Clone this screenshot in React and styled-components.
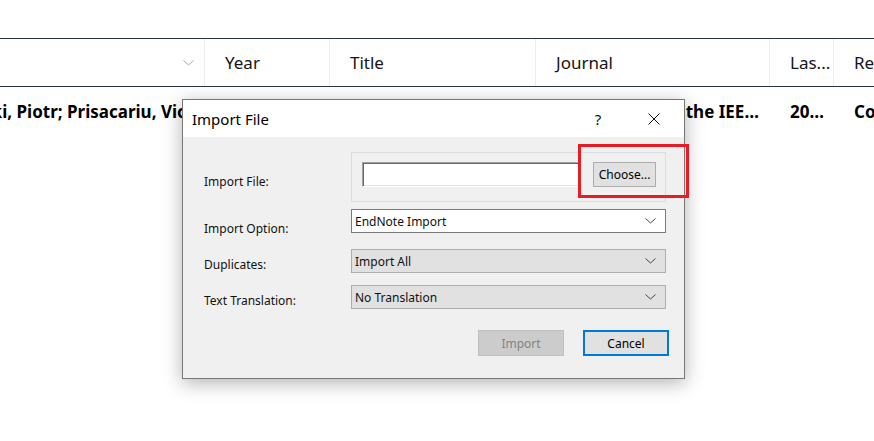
import React from 'react';
import styled, { createGlobalStyle } from 'styled-components';

const GlobalStyle = createGlobalStyle`
  html, body {
    margin: 0;
    padding: 0;
    background: #ffffff;
    overflow: hidden;
  }
  body {
    font-family: 'Noto Sans', 'Open Sans', sans-serif;
  }
`;

const Screen = styled.div`
  position: relative;
  width: 874px;
  height: 441px;
  padding-top: 38px;
  box-sizing: border-box;
  overflow: hidden;
  background: #fff;
`;

/* ---- reference list behind the dialog ---- */

const HeaderRow = styled.div`
  display: flex;
  height: 49px;
  border-top: 1px solid #26364a;
  border-bottom: 1px solid #26364a;
  box-sizing: border-box;
`;

const HeadCell = styled.div`
  flex: none;
  width: ${(p) => p.$w}px;
  display: flex;
  align-items: center;
  justify-content: ${(p) => (p.$end ? 'flex-end' : 'flex-start')};
  padding: 0 ${(p) => (p.$end ? '10px' : '0')} 0 ${(p) => (p.$end ? '0' : '20px')};
  box-sizing: border-box;
  border-right: 1px solid #ececec;
  font-size: 17px;
  color: #141414;
  white-space: nowrap;
  overflow: hidden;
`;

const DataRow = styled.div`
  display: flex;
  height: 48px;
`;

const DataCell = styled.div`
  flex: none;
  width: ${(p) => p.$w}px;
  display: flex;
  align-items: center;
  padding: 0 7px 0 ${(p) => (p.$flush ? 0 : 20)}px;
  box-sizing: border-box;
  font-size: 17px;
  font-weight: 700;
  color: #000;
  white-space: nowrap;
  overflow: hidden;
`;

const Clip = styled.span`
  overflow: hidden;
  text-overflow: ellipsis;
  white-space: nowrap;
`;

const Shifted = styled.span`
  margin-left: ${(p) => p.$shift}px;
  white-space: nowrap;
`;

/* ---- dialog ---- */

const Dialog = styled.div`
  position: absolute;
  left: 182px;
  top: 99px;
  width: 503px;
  height: 280px;
  box-sizing: border-box;
  border: 1px solid #777;
  background: #f0f0f0;
  box-shadow: 0 4px 18px rgba(0, 0, 0, 0.3);
  display: flex;
  flex-direction: column;
`;

const TitleBar = styled.div`
  height: 37px;
  flex: none;
  background: #fff;
  display: flex;
  align-items: center;
  padding-left: 9px;
  padding-right: 2px;
`;

const TitleText = styled.div`
  flex: 1;
  font-size: 15px;
  color: #000;
`;

const TitleButton = styled.div`
  width: 56px;
  height: 37px;
  display: flex;
  align-items: center;
  justify-content: center;
  font-size: 15px;
  color: #111;
`;

const Body = styled.div`
  flex: 1;
  padding: 15px 15px 0 21px;
  display: flex;
  flex-direction: column;
  font-size: 12px;
  color: #111;
`;

const FieldRow = styled.div`
  display: flex;
  height: ${(p) => p.$h}px;
  margin-top: ${(p) => p.$mt}px;
  flex: none;
`;

const Label = styled.div`
  width: 147px;
  flex: none;
  padding-top: ${(p) => p.$pt}px;
  line-height: 16px;
`;

const GroupBox = styled.div`
  width: 315px;
  height: 50px;
  box-sizing: border-box;
  border: 1px solid #dcdcdc;
  padding: 9px 9px 0 10px;
  display: flex;
  gap: 12px;
`;

const FileInput = styled.div`
  width: 220px;
  height: 25px;
  box-sizing: border-box;
  background: #fff;
  border-top: 1px solid #a0a0a0;
  border-left: 1px solid #a0a0a0;
  border-bottom: 1px solid #fff;
  border-right: 1px solid #fff;
  box-shadow: inset 1px 1px 0 #696969, inset -1px -1px 0 #e3e3e3;
`;

const PushButton = styled.div`
  width: ${(p) => p.$w}px;
  height: ${(p) => p.$h}px;
  box-sizing: border-box;
  display: flex;
  align-items: center;
  justify-content: center;
  background: ${(p) => (p.$disabled ? '#cccccc' : '#e1e1e1')};
  border: ${(p) =>
    p.$default ? '2px solid #0078d7' : p.$disabled ? '1px solid #bfbfbf' : '1px solid #adadad'};
  color: ${(p) => (p.$disabled ? '#838383' : '#000')};
  font-size: 12px;
`;

const Select = styled.div`
  width: 315px;
  height: 24px;
  box-sizing: border-box;
  display: flex;
  align-items: center;
  justify-content: space-between;
  padding: 0 9px 0 3px;
  background: ${(p) => (p.$white ? '#fff' : '#e1e1e1')};
  border: 1px solid ${(p) => (p.$white ? '#7a7a7a' : '#adadad')};
`;

const ButtonBar = styled.div`
  display: flex;
  justify-content: flex-end;
  gap: 19px;
  margin-top: 21px;
`;

const Highlight = styled.div`
  position: absolute;
  left: 578px;
  top: 144px;
  width: 111px;
  height: 54px;
  box-sizing: border-box;
  border: 3px solid #e81c24;
`;

const Chevron = ({ color = '#333' }) => (
  <svg width="11" height="6" viewBox="0 0 11 6">
    <path d="M0.5 0.5 L5.5 5 L10.5 0.5" fill="none" stroke={color} strokeWidth="1" />
  </svg>
);

const CloseIcon = () => (
  <svg width="12" height="12" viewBox="0 0 12 12">
    <path d="M0.5 0.5 L11.5 11.5 M11.5 0.5 L0.5 11.5" stroke="#111" strokeWidth="1" />
  </svg>
);

const columns = [205, 125, 206, 234, 64, 120];

export default function App() {
  return (
    <Screen>
      <GlobalStyle />
      <HeaderRow>
        <HeadCell $w={columns[0]} $end>
          <Chevron color="#a8a8a8" />
        </HeadCell>
        <HeadCell $w={columns[1]}>Year</HeadCell>
        <HeadCell $w={columns[2]}>Title</HeadCell>
        <HeadCell $w={columns[3]}>Journal</HeadCell>
        <HeadCell $w={columns[4]}>Las...</HeadCell>
        <HeadCell $w={columns[5]}>Reference Type</HeadCell>
      </HeaderRow>
      <DataRow>
        <DataCell $w={columns[0]} $flush>
          <Shifted $shift={-90}>Bojanowski, Piotr; Prisacariu, Victor</Shifted>
        </DataCell>
        <DataCell $w={columns[1]}>2019</DataCell>
        <DataCell $w={columns[2]}>
          <Clip>Dense Semantic Mapping</Clip>
        </DataCell>
        <DataCell $w={columns[3]}>
          <Clip>Proceedings of the IEEE/CVF Conference</Clip>
        </DataCell>
        <DataCell $w={columns[4]}>
          <Clip>2023-05-12</Clip>
        </DataCell>
        <DataCell $w={columns[5]}>Conference Paper</DataCell>
      </DataRow>

      <Dialog>
        <TitleBar>
          <TitleText>Import File</TitleText>
          <TitleButton>?</TitleButton>
          <TitleButton>
            <CloseIcon />
          </TitleButton>
        </TitleBar>
        <Body>
          <FieldRow $h={50} $mt={0}>
            <Label $pt={22}>Import File:</Label>
            <GroupBox>
              <FileInput />
              <PushButton $w={63} $h={25}>Choose...</PushButton>
            </GroupBox>
          </FieldRow>
          <FieldRow $h={24} $mt={7}>
            <Label $pt={12}>Import Option:</Label>
            <Select $white>
              <span>EndNote Import</span>
              <Chevron color="#444" />
            </Select>
          </FieldRow>
          <FieldRow $h={24} $mt={16}>
            <Label $pt={8}>Duplicates:</Label>
            <Select>
              <span>Import All</span>
              <Chevron color="#444" />
            </Select>
          </FieldRow>
          <FieldRow $h={24} $mt={12}>
            <Label $pt={8}>Text Translation:</Label>
            <Select>
              <span>No Translation</span>
              <Chevron color="#444" />
            </Select>
          </FieldRow>
          <ButtonBar>
            <PushButton $w={86} $h={26} $disabled>Import</PushButton>
            <PushButton $w={86} $h={26} $default>Cancel</PushButton>
          </ButtonBar>
        </Body>
      </Dialog>
      <Highlight />
    </Screen>
  );
}
